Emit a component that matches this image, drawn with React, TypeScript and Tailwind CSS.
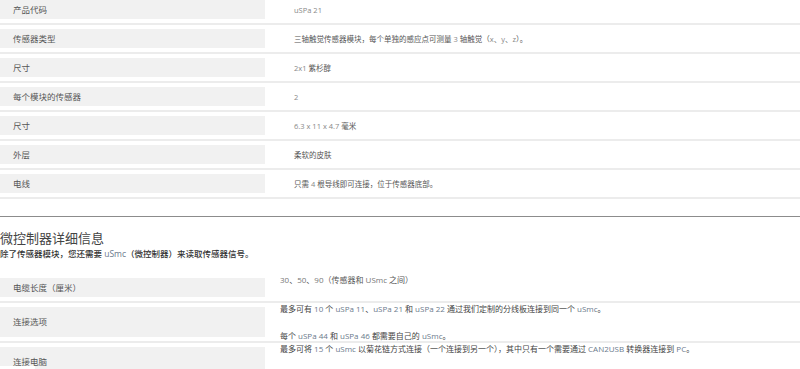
import React from "react";

const FONT = '"Open Sans", "Noto Sans CJK SC", sans-serif';

function Mixed({ text, latin }: { text: string; latin: string }) {
  const parts = text.split(/([A-Za-z0-9][A-Za-z0-9 .]*[A-Za-z0-9]|[A-Za-z0-9])/);
  return (
    <>
      {parts.map((p, i) =>
        /^[A-Za-z0-9]/.test(p) ? (
          <span key={i} className={latin}>
            {p}
          </span>
        ) : (
          <span key={i}>{p}</span>
        )
      )}
    </>
  );
}

const specs: [string, string][] = [
  ["产品代码", "uSPa 21"],
  ["传感器类型", "三轴触觉传感器模块，每个单独的感应点可测量 3 轴触觉（x、y、z）。"],
  ["尺寸", "2x1 紫杉醇"],
  ["每个模块的传感器", "2"],
  ["尺寸", "6.3 x 11 x 4.7 毫米"],
  ["外层", "柔软的皮肤"],
  ["电线", "只需 4 根导线即可连接，位于传感器底部。"],
];

function Sep() {
  return (
    <div className="py-[4px]">
      <div className="h-[2px] bg-[#ececec]" />
    </div>
  );
}

export default function App() {
  return (
    <div
      className="relative w-[800px] h-[369px] overflow-hidden bg-white text-[8.5px] leading-[12px]"
      style={{ fontFamily: FONT }}
    >
      {specs.map(([k, v], i) => (
        <div key={i}>
          <div className="flex items-center h-[19px]">
            <div className="w-[265px] h-full bg-[#f1f1f1] flex items-center pl-[13px] text-[#555]">
              {k}
            </div>
            <div className="pl-[29px] text-[7.5px] text-[#555]">
              <Mixed text={v} latin="text-[#888]" />
            </div>
          </div>
          <Sep />
        </div>
      ))}

      <div className="h-[1px] bg-[#8c8c8c] mt-[13px]" />

      <div className="mt-[13px] text-[13px] leading-[16px] text-[#444]">微控制器详细信息</div>
      <div className="mt-[2px] text-[#333] font-medium">
        除了传感器模块，您还需要 <span className="text-[#6b7a8c] font-normal">uSmc</span>（微控制器）来读取传感器信号。
      </div>

      <div className="mt-[18px]">
        <div className="flex h-[19px]">
          <div className="w-[265px] h-full bg-[#f1f1f1] flex items-center pl-[13px] text-[#555]">
            电缆长度（厘米）
          </div>
          <div className="pl-[15px] mt-[-4px] text-[8px] text-[#555]">
            <Mixed text="30、50、90（传感器和 USmc 之间）" latin="text-[#777]" />
          </div>
        </div>
        <Sep />
        <div className="flex h-[30px]">
          <div className="w-[265px] h-full bg-[#f1f1f1] flex items-center pl-[13px] text-[#555]">
            连接选项
          </div>
          <div className="pl-[15px] mt-[-4px] text-[8px] text-[#444]">
            <div>
              <Mixed
                text="最多可有 10 个 uSPa 11、uSPa 21 和 uSPa 22 通过我们定制的分线板连接到同一个 uSmc。"
                latin="text-[#6b7a8c]"
              />
            </div>
            <div className="mt-[15px]">
              <Mixed text="每个 uSPa 44 和 uSPa 46 都需要自己的 uSmc。" latin="text-[#6b7a8c]" />
            </div>
          </div>
        </div>
        <Sep />
        <div className="flex h-[30px]">
          <div className="w-[265px] h-full bg-[#f1f1f1] flex items-center pl-[13px] text-[#555]">
            连接电脑
          </div>
          <div className="pl-[15px] mt-[-4px] text-[8px] text-[#444]">
            <Mixed
              text="最多可将 15 个 uSmc 以菊花链方式连接（一个连接到另一个），其中只有一个需要通过 CAN2USB 转换器连接到 PC。"
              latin="text-[#6b7a8c]"
            />
          </div>
        </div>
      </div>
      <div className="absolute left-0 bottom-0 w-[35px] h-[3px] bg-white" />
    </div>
  );
}
